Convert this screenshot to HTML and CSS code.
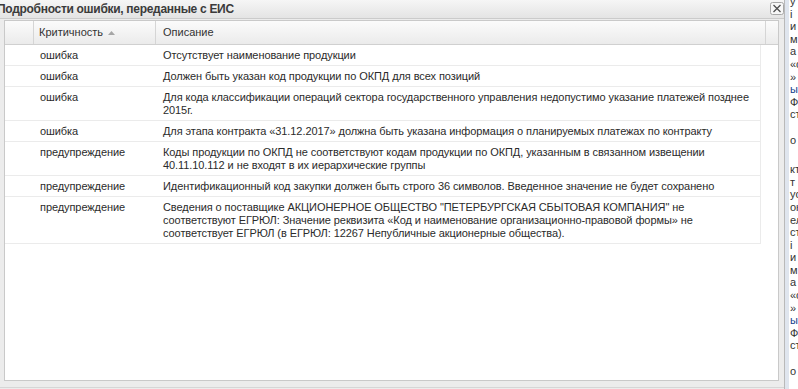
FILE: index.html
```html
<!DOCTYPE html>
<html lang="ru">
  <head>
    <meta charset="UTF-8" />
    <meta name="viewport" content="width=device-width, initial-scale=1.0" />
    <title>Подробности ошибки</title>
    <link rel="stylesheet" href="styles.css">
  </head>
  <body>
    <div class="screen">
      <div class="window">
        <div class="win-header">
          <span class="win-title">Подробности ошибки, переданные с ЕИС</span>
          <button class="win-close" title="Закрыть">
            <svg width="14" height="13" viewBox="0 0 14 13">
              <rect x="0.5" y="0.5" width="13" height="12" rx="2" ry="2" fill="#f7f7f7" stroke="#a8a8a8" />
              <path d="M3.5 3 L10.5 10 M10.5 3 L3.5 10" stroke="#505050" stroke-width="1.3" fill="none" />
            </svg>
          </button>
        </div>

        <div class="win-body">
          <div class="grid">
            <div class="grid-head">
              <div class="hd hd-num"></div>
              <div class="hd hd-level">
                Критичность
                <svg class="sort" width="7" height="4" viewBox="0 0 7 4">
                  <path d="M0 4 L3.5 0 L7 4 Z" fill="#a6a6a6" />
                </svg>
              </div>
              <div class="hd hd-text">Описание</div>
              <div class="hd hd-rest"></div>
            </div>

            <div class="grid-rows">
              <div class="row">
                <div class="cell c-num"></div>
                <div class="cell c-level">ошибка</div>
                <div class="cell c-text">Отсутствует наименование продукции</div>
              </div>
              <div class="row">
                <div class="cell c-num"></div>
                <div class="cell c-level">ошибка</div>
                <div class="cell c-text">Должен быть указан код продукции по ОКПД для всех позиций</div>
              </div>
              <div class="row">
                <div class="cell c-num"></div>
                <div class="cell c-level">ошибка</div>
                <div class="cell c-text">Для кода классификации операций сектора государственного управления недопустимо указание платежей позднее 2015г.</div>
              </div>
              <div class="row">
                <div class="cell c-num"></div>
                <div class="cell c-level">ошибка</div>
                <div class="cell c-text">Для этапа контракта «31.12.2017» должна быть указана информация о планируемых платежах по контракту</div>
              </div>
              <div class="row">
                <div class="cell c-num"></div>
                <div class="cell c-level">предупреждение</div>
                <div class="cell c-text">Коды продукции по ОКПД не соответствуют кодам продукции по ОКПД, указанным в связанном извещении 40.11.10.112 и не входят в их иерархические группы</div>
              </div>
              <div class="row">
                <div class="cell c-num"></div>
                <div class="cell c-level">предупреждение</div>
                <div class="cell c-text">Идентификационный код закупки должен быть строго 36 символов. Введенное значение не будет сохранено</div>
              </div>
              <div class="row">
                <div class="cell c-num"></div>
                <div class="cell c-level">предупреждение</div>
                <div class="cell c-text">Сведения о поставщике АКЦИОНЕРНОЕ ОБЩЕСТВО "ПЕТЕРБУРГСКАЯ СБЫТОВАЯ КОМПАНИЯ" не соответствуют ЕГРЮЛ: Значение реквизита «Код и наименование организационно-правовой формы» не соответствует ЕГРЮЛ (в ЕГРЮЛ: 12267 Непубличные акционерные общества).</div>
              </div>
            </div>
          </div>
        </div>

        <div class="win-foot"></div>
      </div>

      <!-- край страницы под окном -->
      <div class="page-edge">
        <div class="edge-lines">
          <div>у</div><div>і</div><div>и</div><div>м</div><div>а</div>
          <div>«с</div><div>»</div><div class="link">ы</div><div>Ф</div><div>ст</div>
          <div>&nbsp;</div><div>о</div>
        </div>
        <div class="edge-lines edge-lower">
          <div>кт</div><div>т</div><div>ус</div><div>он</div><div>ел</div>
          <div>ст</div><div>і</div><div>и</div><div>м</div><div>а</div>
          <div>«с</div><div>»</div><div class="link">ы</div><div>Ф</div><div>ст</div>
          <div>&nbsp;</div><div>о</div>
        </div>
      </div>
    </div>
  </body>
</html>
```

FILE: styles.css
```css
body {
  margin: 0;
  font-family: "Liberation Sans", Arial, sans-serif;
  font-size: 11px;
  color: #333;
  background: #fff;
}
.screen {
  display: flex;
  width: 798px;
  height: 389px;
  overflow: hidden;
}
.window {
  display: flex;
  flex-direction: column;
  width: 785px;
  flex: none;
  background: #ececec;
  border-right: 1px solid #b9b9b9;
  box-sizing: border-box;
}
.win-header {
  display: flex;
  justify-content: space-between;
  align-items: flex-start;
  height: 18px;
  background: linear-gradient(#f6f6f6, #e4e4e4);
  border-bottom: 1px solid #cbcbcb;
}
.win-title {
  margin-left: -3px;
  line-height: 18px;
  font-size: 12px;
  font-weight: bold;
  letter-spacing: -0.3px;
  color: #3b3b3b;
  white-space: nowrap;
}
.win-close {
  margin-top: 2px;
  padding: 0;
  border: none;
  background: none;
  line-height: 0;
  cursor: pointer;
}
.win-body {
  padding: 1px 5px 0 4px;
}
.grid {
  height: 361px;
  box-sizing: border-box;
  border: 1px solid #c9c9c9;
  background: #fff;
}
.grid-head {
  display: flex;
  height: 23px;
  background: linear-gradient(#fbfbfb, #ebebeb);
  border-bottom: 1px solid #d0d0d0;
}
.hd {
  box-sizing: border-box;
  line-height: 23px;
  color: #333;
  border-right: 1px solid #d5d5d5;
  white-space: nowrap;
}
.hd-num {
  width: 29px;
}
.hd-level {
  width: 122px;
  padding-left: 5px;
}
.hd-level .sort {
  margin-left: 2px;
  vertical-align: 1px;
}
.hd-text {
  width: 610px;
  padding-left: 7px;
}
.hd-rest {
  flex: 1;
  border-right: none;
}
.grid-rows {
  width: 756px;
}
.row {
  display: flex;
  border-bottom: 1px solid #ebebeb;
  border-right: 1px solid #ebebeb;
}
.cell {
  box-sizing: border-box;
  padding: 4px 0 3px;
  line-height: 13px;
  color: #2b2b2b;
  letter-spacing: -0.08px;
}
.c-num {
  width: 29px;
}
.c-level {
  width: 122px;
  padding-left: 6px;
}
.c-text {
  flex: 1;
  padding-left: 7px;
  padding-right: 2px;
}
.win-foot {
  flex: 1;
  border-bottom: 1px solid #d6d6d6;
  margin-bottom: 1px;
}
.page-edge {
  flex: 1;
  background: #fff;
  border-left: 4px solid #dfe5ee;
  color: #333;
  overflow: hidden;
  padding-left: 1px;
}
.edge-lines {
  margin-top: -5px;
  line-height: 12.6px;
  white-space: nowrap;
}
.edge-lower {
  margin-top: 17px;
}
.link {
  color: #15428b;
}
```
